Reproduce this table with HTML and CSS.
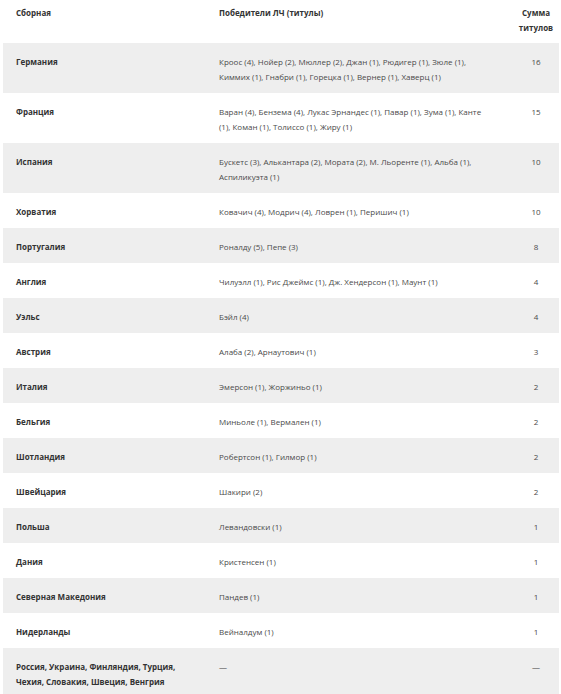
FILE: index.html
```html
<!DOCTYPE html>
<html lang="ru">
<head>
<meta charset="utf-8">
<link rel="stylesheet" href="styles.css">
</head>
<body>
<table class="tbl">
  <colgroup>
    <col class="c1"><col class="c2"><col class="c3">
  </colgroup>
  <thead>
    <tr><th>Сборная</th><th>Победители ЛЧ (титулы)</th><th class="num">Сумма титулов</th></tr>
  </thead>
  <tbody>
    <tr><td class="team">Германия</td><td>Кроос (4), Нойер (2), Мюллер (2), Джан (1), Рюдигер (1), Зюле (1), Киммих (1), Гнабри (1), Горецка (1), Вернер (1), Хаверц (1)</td><td class="num">16</td></tr>
    <tr><td class="team">Франция</td><td>Варан (4), Бензема (4), Лукас Эрнандес (1), Павар (1), Зума (1), Канте (1), Коман (1), Толиссо (1), Жиру (1)</td><td class="num">15</td></tr>
    <tr><td class="team">Испания</td><td>Бускетс (3), Алькантара (2), Мората (2), М. Льоренте (1), Альба (1), Аспиликуэта (1)</td><td class="num">10</td></tr>
    <tr><td class="team">Хорватия</td><td>Ковачич (4), Модрич (4), Ловрен (1), Перишич (1)</td><td class="num">10</td></tr>
    <tr><td class="team">Португалия</td><td>Роналду (5), Пепе (3)</td><td class="num">8</td></tr>
    <tr><td class="team">Англия</td><td>Чилуэлл (1), Рис Джеймс (1), Дж. Хендерсон (1), Маунт (1)</td><td class="num">4</td></tr>
    <tr><td class="team">Уэльс</td><td>Бэйл (4)</td><td class="num">4</td></tr>
    <tr><td class="team">Австрия</td><td>Алаба (2), Арнаутович (1)</td><td class="num">3</td></tr>
    <tr><td class="team">Италия</td><td>Эмерсон (1), Жоржиньо (1)</td><td class="num">2</td></tr>
    <tr><td class="team">Бельгия</td><td>Миньоле (1), Вермален (1)</td><td class="num">2</td></tr>
    <tr><td class="team">Шотландия</td><td>Робертсон (1), Гилмор (1)</td><td class="num">2</td></tr>
    <tr><td class="team">Швейцария</td><td>Шакири (2)</td><td class="num">2</td></tr>
    <tr><td class="team">Польша</td><td>Левандовски (1)</td><td class="num">1</td></tr>
    <tr><td class="team">Дания</td><td>Кристенсен (1)</td><td class="num">1</td></tr>
    <tr><td class="team">Северная Македония</td><td>Пандев (1)</td><td class="num">1</td></tr>
    <tr><td class="team">Нидерланды</td><td>Вейналдум (1)</td><td class="num">1</td></tr>
    <tr><td class="team">Россия, Украина, Финляндия, Турция, Чехия, Словакия, Швеция, Венгрия</td><td>—</td><td class="num">—</td></tr>
  </tbody>
</table>
</body>
</html>
```

FILE: styles.css
```css
html, body {
  margin: 0;
  padding: 0;
  background: #ffffff;
}
body {
  padding: 0 2px 0 3px;
  font-family: "Open Sans", "Noto Sans", sans-serif;
  font-size: 8px;
  line-height: 15px;
  color: #4a4a4a;
}
.tbl {
  width: 556px;
  border-collapse: collapse;
  table-layout: fixed;
}
.c1 { width: 203px; }
.c2 { width: 307px; }
.c3 { width: 46px; }
.tbl th {
  text-align: left;
  font-weight: 700;
  color: #333333;
  vertical-align: top;
  padding: 5px 13px 8px 13px;
}
.tbl td {
  vertical-align: top;
  padding: 11px 13px 9px 13px;
}
.tbl td.team {
  font-weight: 700;
  color: #333333;
}
.tbl th.num, .tbl td.num {
  text-align: center;
  padding-left: 2px;
  padding-right: 2px;
}
.tbl tbody tr:nth-child(odd) {
  background: #eeeeee;
}
.tbl td:nth-child(2) {
  padding-right: 20px;
}
```
